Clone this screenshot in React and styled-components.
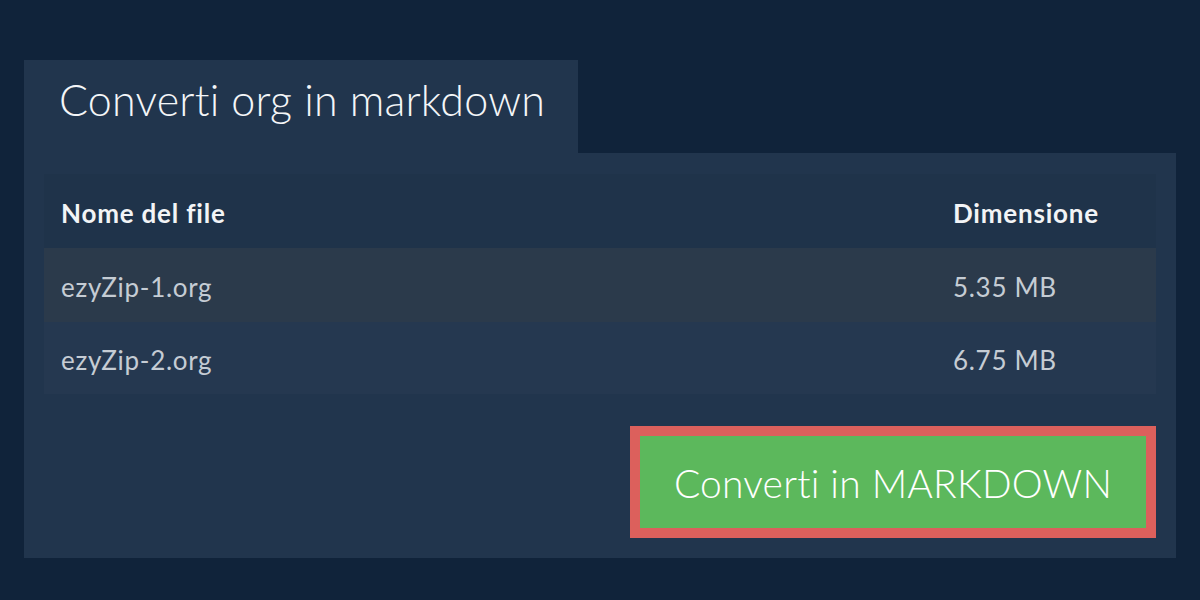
import React from "react";
import styled, { createGlobalStyle } from "styled-components";

const Global = createGlobalStyle`
  html, body { margin: 0; padding: 0; background: #10233a; }
  body { font-family: Lato, "Open Sans", sans-serif; font-variant-ligatures: none; }
  * { box-sizing: border-box; }
`;

const Page = styled.div`
  width: 1200px;
  height: 600px;
  padding: 60px 24px 0 24px;
  background: #10233a;
`;

const Card = styled.section`
  display: flex;
  flex-direction: column;
  width: 1152px;
`;

const Tab = styled.h1`
  margin: 0;
  width: 554px;
  height: 93px;
  background: #21354d;
  color: #f4f6f8;
  font-weight: 300;
  font-size: 43px;
  line-height: normal;
  letter-spacing: 0.2px;
  padding: 14px 0 0 35px;
  white-space: nowrap;
  font-variant-ligatures: none;
`;

const Body = styled.div`
  background: #21354d;
  padding: 21px 20px 20px 20px;
  display: flex;
  flex-direction: column;
  gap: 32px;
`;

const Table = styled.div`
  display: grid;
  grid-template-columns: 1fr 220px;
`;

const Row = styled.div`
  display: contents;
  & > div {
    background: ${(p) => p.$bg};
    height: ${(p) => p.$h}px;
    color: ${(p) => (p.$head ? "#f2f4f6" : "#c5ccd4")};
    font-weight: ${(p) => (p.$head ? 700 : 400)};
    letter-spacing: ${(p) => (p.$head ? "0.8px" : "0.7px")};
  }
`;

const Cell = styled.div`
  display: flex;
  align-items: center;
  padding: 3px 0 0 17px;
  font-size: 26px;
  font-variant-ligatures: none;
`;

const Actions = styled.div`
  display: flex;
  justify-content: flex-end;
`;

const Button = styled.button`
  width: 526px;
  height: 112px;
  border: 10px solid #dc605c;
  background: #5cb85c;
  color: #ffffff;
  font-family: Lato, "Open Sans", sans-serif;
  font-weight: 300;
  font-size: 39px;
  letter-spacing: 0.2px;
  font-variant-ligatures: none;
  padding: 2px 0 0 0;
  cursor: pointer;
`;

const rows = [
  { name: "ezyZip-1.org", size: "5.35 MB", bg: "#2b3a4b", h: 74 },
  { name: "ezyZip-2.org", size: "6.75 MB", bg: "#253850", h: 72 },
];

export default function App() {
  return (
    <Page>
      <Global />
      <Card>
        <Tab>Converti org in markdown</Tab>
        <Body>
          <Table>
            <Row $head $bg="#1f334a" $h={74}>
              <Cell>Nome del file</Cell>
              <Cell>Dimensione</Cell>
            </Row>
            {rows.map((r) => (
              <Row key={r.name} $bg={r.bg} $h={r.h}>
                <Cell>{r.name}</Cell>
                <Cell>{r.size}</Cell>
              </Row>
            ))}
          </Table>
          <Actions>
            <Button>Converti in MARKDOWN</Button>
          </Actions>
        </Body>
      </Card>
    </Page>
  );
}
